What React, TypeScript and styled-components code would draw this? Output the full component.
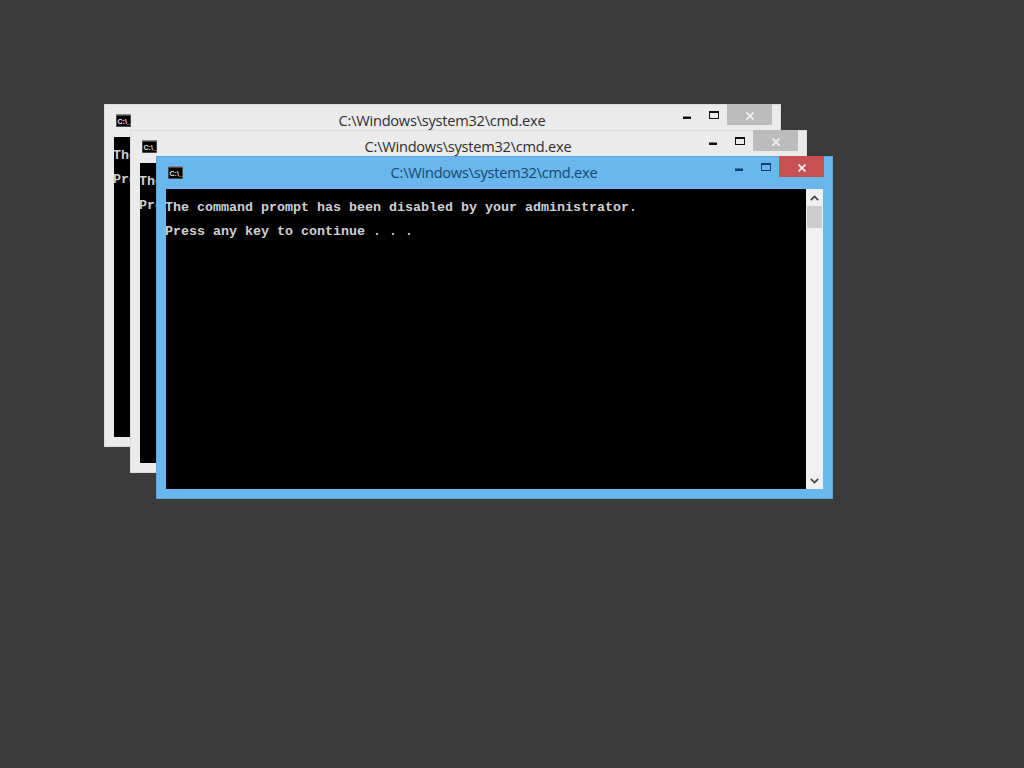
import React from "react";
import styled, { createGlobalStyle } from "styled-components";

const Global = createGlobalStyle`
  html, body { margin: 0; padding: 0; background: #3b3b3b; }
  #root { width: 1024px; height: 768px; overflow: hidden; }
`;

const Desktop = styled.main`
  position: relative;
  width: 1024px;
  height: 768px;
  background: #3b3b3b;
  overflow: hidden;
`;

const Win = styled.section<{ $at: number; $active?: boolean }>`
  position: absolute;
  left: ${(p) => p.$at}px;
  top: ${(p) => p.$at}px;
  width: 677px;
  height: 343px;
  box-sizing: border-box;
  display: flex;
  flex-direction: column;
  background: ${(p) => (p.$active ? "#69b7ec" : "#ebebeb")};
  border: 1px solid ${(p) => (p.$active ? "#5ba6da" : "#dcdcdc")};
  padding: 0 9px 9px 9px;
`;

const TitleBar = styled.header`
  height: 32px;
  flex: none;
  display: grid;
  grid-template-columns: 1fr auto 1fr;
  align-items: start;
`;

const IconSlot = styled.div`
  padding: 9px 0 0 2px;
  height: 13px;
`;

const Title = styled.h1<{ $active?: boolean }>`
  margin: 5px 0 0 -1px;
  font: 400 14.6px/20px "Open Sans", sans-serif;
  letter-spacing: -0.24px;
  color: ${(p) => (p.$active ? "#17476f" : "#2e2e2e")};
  white-space: nowrap;
`;

const Controls = styled.div`
  justify-self: end;
  display: flex;
  align-items: flex-start;
  margin: -1px -1px 0 0;
`;

const Ctl = styled.div<{ $top: number; $width: number }>`
  width: ${(p) => p.$width}px;
  height: 21px;
  box-sizing: border-box;
  padding-top: ${(p) => p.$top}px;
  display: flex;
  align-items: flex-start;
  justify-content: center;
`;

const CloseBtn = styled.div<{ $active?: boolean }>`
  width: 45px;
  height: 21px;
  box-sizing: border-box;
  padding-top: 8px;
  display: flex;
  align-items: flex-start;
  justify-content: center;
  background: ${(p) => (p.$active ? "#c75050" : "#bcbcbc")};
`;

const Body = styled.div`
  flex: 1;
  display: flex;
  min-height: 0;
`;

const Console = styled.pre`
  flex: 1;
  margin: 0;
  padding: 13px 0 0 0;
  background: #000;
  color: #cfcfcf;
  font: 700 13.33px/12px "Liberation Mono", monospace;
`;

const Line = styled.div`
  height: 12px;
  margin: 0 0 12px -1px;
  white-space: pre;
`;

const Scrollbar = styled.div`
  width: 17px;
  flex: none;
  background: #f0f0f0;
  display: flex;
  flex-direction: column;
`;

const Arrow = styled.div`
  height: 17px;
  flex: none;
  display: flex;
  align-items: center;
  justify-content: center;
`;

const Thumb = styled.div`
  height: 22px;
  flex: none;
  margin: 0 1px;
  background: #cdcdcd;
`;

const Track = styled.div`
  flex: 1;
`;

const CmdIcon = () => (
  <svg width="15" height="13" viewBox="0 0 15 13" style={{ display: "block" }}>
    <rect width="15" height="13" fill="#8a8a8a" />
    <rect x="0.5" y="1.5" width="14" height="11" fill="#000" />
    <text x="1.5" y="9.5" fontFamily="Liberation Sans, sans-serif" fontWeight="700" fontSize="7" fill="#e8e8e8">
      C:\_
    </text>
  </svg>
);

const MinIcon = ({ c }: { c: string }) => (
  <svg width="8" height="3" viewBox="0 0 8 3" style={{ display: "block" }}>
    <rect x="0" y="0.5" width="8" height="2.5" fill={c} />
  </svg>
);

const MaxIcon = ({ c }: { c: string }) => (
  <svg width="10" height="8" viewBox="0 0 10 8" style={{ display: "block" }}>
    <rect x="0.5" y="0.5" width="9" height="7" fill="none" stroke={c} />
    <rect x="0" y="0" width="10" height="2" fill={c} />
  </svg>
);

const CloseIcon = () => (
  <svg width="8" height="8" viewBox="0 0 8 8" style={{ display: "block" }}>
    <path d="M0.5 0.5 L7.5 7.5 M7.5 0.5 L0.5 7.5" stroke="#f4f0ee" strokeWidth="1.7" fill="none" />
  </svg>
);

const Chevron = ({ up }: { up?: boolean }) => (
  <svg width="9" height="6" viewBox="0 0 9 6" style={{ display: "block" }}>
    <path d={up ? "M0.8 5.2 L4.5 1.4 L8.2 5.2" : "M0.8 0.8 L4.5 4.6 L8.2 0.8"} stroke="#444" strokeWidth="1.7" fill="none" />
  </svg>
);

const CmdWindow = ({ at, active }: { at: number; active?: boolean }) => {
  const glyph = active ? "#0c3f70" : "#111";
  return (
    <Win $at={at} $active={active}>
      <TitleBar>
        <IconSlot>
          <CmdIcon />
        </IconSlot>
        <Title $active={active}>C:\Windows\system32\cmd.exe</Title>
        <Controls>
          <Ctl $top={12} $width={28}>
            <MinIcon c={glyph} />
          </Ctl>
          <Ctl $top={7} $width={26}>
            <MaxIcon c={glyph} />
          </Ctl>
          <CloseBtn $active={active}>
            <CloseIcon />
          </CloseBtn>
        </Controls>
      </TitleBar>
      <Body>
        <Console>
          <Line>The command prompt has been disabled by your administrator.</Line>
          <Line>Press any key to continue . . .</Line>
        </Console>
        <Scrollbar>
          <Arrow>
            <Chevron up />
          </Arrow>
          <Thumb />
          <Track />
          <Arrow>
            <Chevron />
          </Arrow>
        </Scrollbar>
      </Body>
    </Win>
  );
};

export default function App() {
  return (
    <Desktop>
      <Global />
      <CmdWindow at={104} />
      <CmdWindow at={130} />
      <CmdWindow at={156} active />
    </Desktop>
  );
}
